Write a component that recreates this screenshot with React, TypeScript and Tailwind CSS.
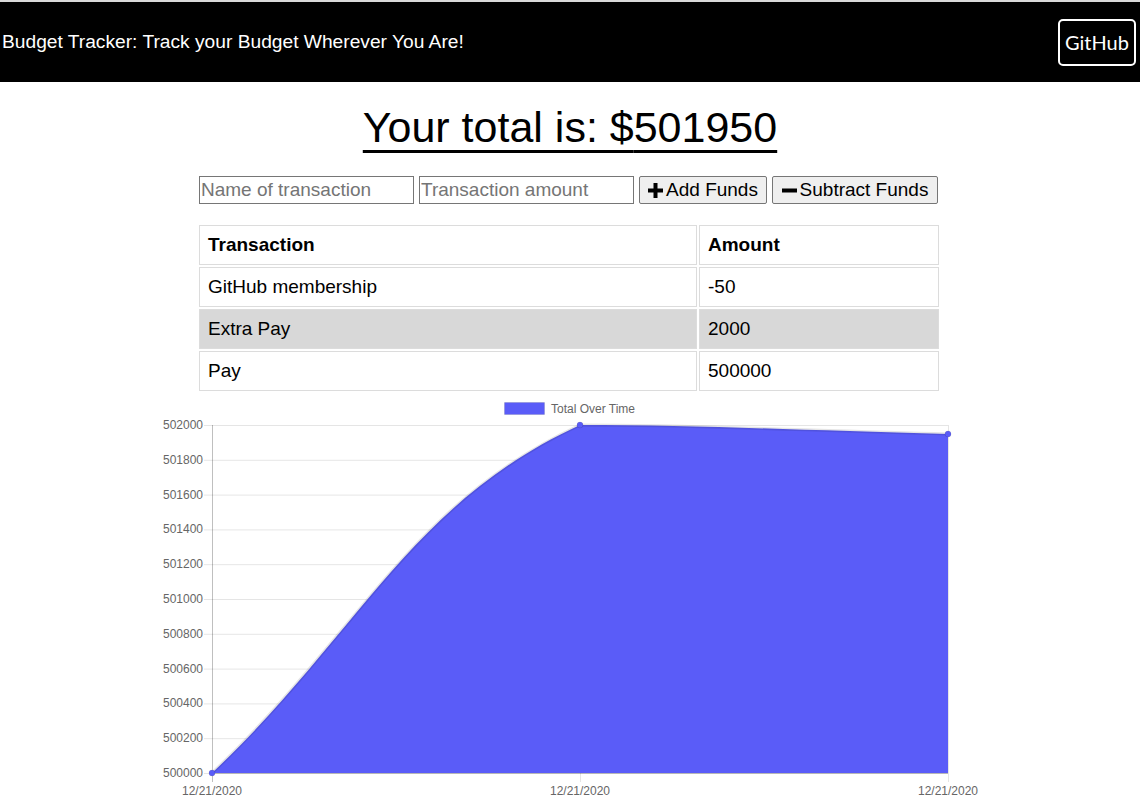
import React from "react";

// Data
interface Transaction {
  name: string;
  value: number;
}

const transactions: Transaction[] = [
  { name: "GitHub membership", value: -50 },
  { name: "Extra Pay", value: 2000 },
  { name: "Pay", value: 500000 },
];

const yTicks = [502000, 501800, 501600, 501400, 501200, 501000, 500800, 500600, 500400, 500200, 500000];

// chart geometry, in page coords
const left = 212;
const right = 948;
const top = 425;
const bottom = 773;
const yOf = (v: number) => top + ((502000 - v) / 2000) * (bottom - top);

const Chart: React.FC = () => {
  const line = "M212,773 C359.2,633.8 409.5,503.5 580,425 C704,425 800.8,430.4 948,434";
  const area = line + " L948,773 L212,773 Z";

  return (
    <svg width="1140" height="400" viewBox="0 0 1140 400" className="block">
      <g transform="translate(0,-396)" fontFamily="'Liberation Sans', Arial, sans-serif" fontSize="12">
        {/* legend */}
        <rect x="504.5" y="402.5" width="40" height="12" fill="#5a5cf8" stroke="rgba(0,0,0,0.1)" />
        <text x="551" y="412.5" fill="#666">
          Total Over Time
        </text>

        {/* horizontal grid */}
        {yTicks.map((v) => (
          <g key={v}>
            <line x1={204} x2={right} y1={yOf(v) + 0.5} y2={yOf(v) + 0.5} stroke="rgba(0,0,0,0.1)" />
            <text x="203" y={yOf(v) + 4} textAnchor="end" fill="#666">
              {v}
            </text>
          </g>
        ))}

        {/* vertical grid */}
        {[left, 580, right].map((x) => (
          <g key={x}>
            <line
              x1={x + 0.5}
              x2={x + 0.5}
              y1={top}
              y2={bottom + 9}
              stroke={x === left ? "rgba(0,0,0,0.25)" : "rgba(0,0,0,0.1)"}
            />
            <text x={x} y="794.5" textAnchor="middle" fill="#666">
              12/21/2020
            </text>
          </g>
        ))}

        <path d={area} fill="#5a5cf8" />
        <path d={line} fill="none" stroke="rgba(0,0,0,0.1)" strokeWidth="3" />
        <line x1={left} x2={right} y1={bottom + 0.5} y2={bottom + 0.5} stroke="rgba(0,0,0,0.2)" />

        {[
          [212, 773],
          [580, 425],
          [948, 434],
        ].map(([x, y]) => (
          <circle key={x} cx={x} cy={y} r="3" fill="#5a5cf8" stroke="rgba(0,0,0,0.1)" />
        ))}
      </g>
    </svg>
  );
};

const App: React.FC = () => {
  const total = transactions.reduce((sum, t) => sum + t.value, 0);

  return (
    <div className="min-h-[796px] bg-white text-black font-['Liberation_Sans',Arial,sans-serif]">
      <header className="flex h-[82px] items-center justify-between border-t-2 border-[#d9d9d9] bg-black pl-[2px] pr-[4px]">
        <span className="text-[19.2px] text-white">Budget Tracker: Track your Budget Wherever You Are!</span>
        <a className="flex h-[47px] w-[78px] items-center justify-center rounded-[5px] border-2 border-white font-['Lato',sans-serif] text-[20px] text-white">
          GitHub
        </a>
      </header>

      <div className="ml-[199px] w-[740px]">
        <h1 className="-ml-[199px] mt-[21px] w-[1140px] text-center text-[43px] leading-[48px] underline decoration-[3px] underline-offset-[8px]">
          Your total is: ${total}
        </h1>

        <div className="mt-[25px] flex h-[28px] gap-[5px]">
          <input
            placeholder="Name of transaction"
            className="h-[28px] w-[215px] border border-[#767676] px-[1px] text-[19px] placeholder:text-[#757575]"
          />
          <input
            placeholder="Transaction amount"
            className="h-[28px] w-[215px] border border-[#767676] px-[1px] text-[19px] placeholder:text-[#757575]"
          />
          <button className="flex h-[28px] w-[128px] items-center justify-center gap-[3px] rounded-[2px] border border-[#767676] bg-[#efefef] text-[19px]">
            <svg width="15" height="15" viewBox="0 0 15 15">
              <path d="M5.5 0h4v5.5H15v4H9.5V15h-4V9.5H0v-4h5.5z" fill="#000" />
            </svg>
            Add Funds
          </button>
          <button className="flex h-[28px] w-[166px] items-center justify-center gap-[3px] rounded-[2px] border border-[#767676] bg-[#efefef] text-[19px]">
            <svg width="15" height="15" viewBox="0 0 15 15">
              <rect x="0" y="5.5" width="15" height="4" fill="#000" />
            </svg>
            Subtract Funds
          </button>
        </div>

        <table className="-ml-[2px] mt-[19px] w-[744px] border-separate border-spacing-[2px] text-[19px]">
          <thead>
            <tr>
              <th className="h-[40px] w-[498px] border border-[#dcdcdc] pl-[8px] text-left font-bold">Transaction</th>
              <th className="h-[40px] border border-[#dcdcdc] pl-[8px] text-left font-bold">Amount</th>
            </tr>
          </thead>
          <tbody>
            {transactions.map((t, i) => (
              <tr key={t.name} className={i === 1 ? "bg-[#d8d8d8]" : ""}>
                <td className="h-[40px] border border-[#dcdcdc] pl-[8px]">{t.name}</td>
                <td className="h-[40px] border border-[#dcdcdc] pl-[8px]">{t.value}</td>
              </tr>
            ))}
          </tbody>
        </table>
      </div>

      <div className="mt-[3px]">
        <Chart />
      </div>
    </div>
  );
};

export default App;
